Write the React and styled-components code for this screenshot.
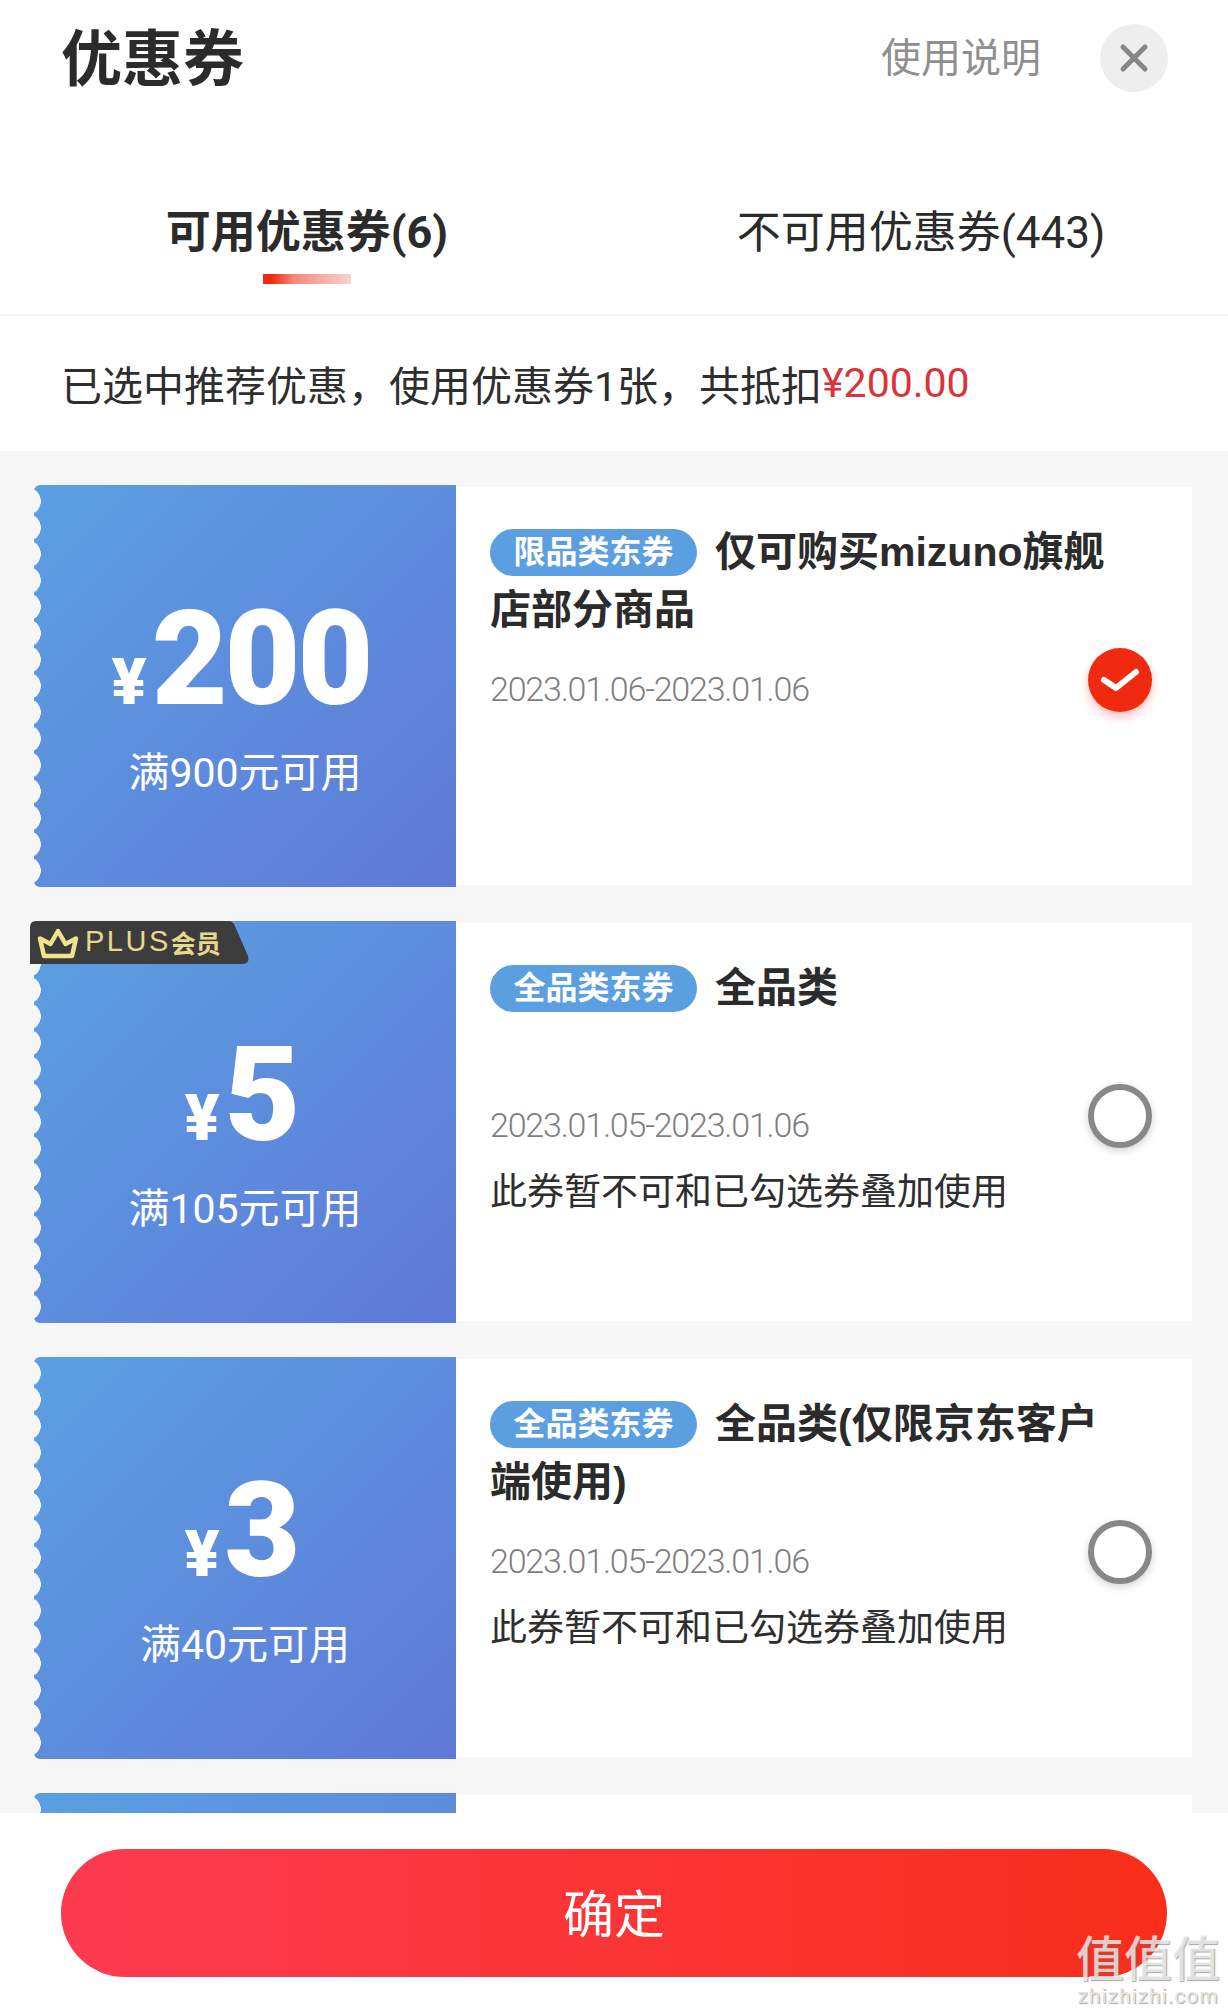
import React from "react";
import styled, { createGlobalStyle } from "styled-components";

const coupons = [
  {
    amount: "200",
    limit: "满900元可用",
    tag: "限品类东券",
    title: ["仅可购买mizuno旗舰", "店部分商品"],
    date: "2023.01.06-2023.01.06",
    checked: true,
  },
  {
    amount: "5",
    limit: "满105元可用",
    tag: "全品类东券",
    title: ["全品类"],
    date: "2023.01.05-2023.01.06",
    note: "此券暂不可和已勾选券叠加使用",
    plus: true,
  },
  {
    amount: "3",
    limit: "满40元可用",
    tag: "全品类东券",
    title: ["全品类(仅限京东客户", "端使用)"],
    date: "2023.01.05-2023.01.06",
    note: "此券暂不可和已勾选券叠加使用",
  },
  { amount: "", limit: "", tag: "", title: [], date: "" },
];

export default function App() {
  return (
    <>
      <GlobalStyle />
      <Page>
        <Header>
          <Title>优惠券</Title>
          <HeaderRight>
            <HelpLink>使用说明</HelpLink>
            <CloseButton>
              <svg width="30" height="30" viewBox="0 0 30 30" fill="none">
                <path d="M4 4L26 26M26 4L4 26" stroke="#868686" strokeWidth="5" strokeLinecap="round" />
              </svg>
            </CloseButton>
          </HeaderRight>
        </Header>

        <Tabs>
          <Tab $active>
            可用优惠券(6)
            <TabBar />
          </Tab>
          <Tab>不可用优惠券(443)</Tab>
        </Tabs>

        <Summary>
          已选中推荐优惠，使用优惠券1张，共抵扣<Price>¥200.00</Price>
        </Summary>

        <List>
          {coupons.map((c, i) => (
            <Coupon key={i}>
              <CouponLeft>
                {c.plus && (
                  <PlusBadge>
                    <svg width="44" height="32" viewBox="0 0 44 32" fill="none">
                      <path
                        d="M8 29L4 11.5L14.5 17L22 4L29.5 17L40 11.5L36 29Z"
                        stroke="#efe38b"
                        strokeWidth="4.5"
                        strokeLinejoin="round"
                      />
                    </svg>
                    <PlusText>PLUS</PlusText>
                    <PlusVip>会员</PlusVip>
                  </PlusBadge>
                )}
                {c.amount && (
                  <>
                    <Amount>
                      <Yen>¥</Yen>
                      {c.amount}
                    </Amount>
                    <Limit>{c.limit}</Limit>
                  </>
                )}
              </CouponLeft>
              <CouponRight>
                {c.tag && (
                  <>
                    <Info>
                      <CouponTitle>
                        <TitleLine>
                          <Tag>{c.tag}</Tag>
                          <span>{c.title[0]}</span>
                        </TitleLine>
                        {c.title[1] && <TitleLine>{c.title[1]}</TitleLine>}
                      </CouponTitle>
                      <DateText>{c.date}</DateText>
                      {c.note && <Note>{c.note}</Note>}
                    </Info>
                    <Radio $checked={c.checked}>
                      {c.checked && (
                        <svg width="40" height="24" viewBox="0 0 40 24" fill="none">
                          <path
                            d="M4 12L16 20L36 4"
                            stroke="#fff"
                            strokeWidth="6"
                            strokeLinecap="round"
                            strokeLinejoin="round"
                          />
                        </svg>
                      )}
                    </Radio>
                  </>
                )}
              </CouponRight>
            </Coupon>
          ))}
        </List>

        <Footer>
          <ConfirmButton>确定</ConfirmButton>
          <Watermark>
            <WatermarkMark>值值值</WatermarkMark>
            <WatermarkUrl>zhizhizhi.com</WatermarkUrl>
          </Watermark>
        </Footer>
      </Page>
    </>
  );
}

const GlobalStyle = createGlobalStyle`
  html, body {
    margin: 0;
    padding: 0;
    background: #fff;
  }
  * {
    box-sizing: border-box;
  }
  body {
    font-family: Roboto, "Noto Sans CJK SC", sans-serif;
  }
`;

const Page = styled.div`
  width: 1228px;
  height: 2015px;
  display: flex;
  flex-direction: column;
  overflow: hidden;
  background: #fff;
  color: #2b2b2b;
`;

const Header = styled.div`
  height: 116px;
  flex: none;
  display: flex;
  align-items: center;
  justify-content: space-between;
  padding: 0 60px 0 61px;
`;

const Title = styled.h1`
  margin: 4px 0 0;
  font-size: 61px;
  line-height: 70px;
  font-weight: 700;
  color: #2b2b2b;
`;

const HeaderRight = styled.div`
  display: flex;
  align-items: center;
  gap: 59px;
`;

const HelpLink = styled.span`
  margin-top: 2px;
  font-size: 40px;
  line-height: 50px;
  color: #8f8f8f;
`;

const CloseButton = styled.div`
  width: 68px;
  height: 68px;
  border-radius: 50%;
  background: #eeeeee;
  display: flex;
  align-items: center;
  justify-content: center;
`;

const Tabs = styled.div`
  flex: none;
  display: grid;
  grid-template-columns: 1fr 1fr;
  margin-top: 91px;
  padding-bottom: 29px;
  border-bottom: 2px solid #f2f2f2;
`;

const Tab = styled.div`
  display: flex;
  flex-direction: column;
  align-items: center;
  height: 78px;
  font-size: ${(props) => (props.$active ? "45px" : "44px")};
  line-height: 52px;
  font-weight: ${(props) => (props.$active ? 700 : 400)};
  color: #2b2b2b;
`;

const TabBar = styled.div`
  width: 88px;
  height: 10px;
  margin-top: 15px;
  background: linear-gradient(90deg, #f0290f 0%, #f0290f 10%, #f6877a 35%, #f6d4d0 100%);
`;

const Summary = styled.div`
  flex: none;
  height: 135px;
  padding: 0 0 2px 61px;
  display: flex;
  align-items: center;
  font-size: 41px;
  white-space: nowrap;
  color: #2e2e2e;
`;

const Price = styled.span`
  color: #d9343c;
`;

const List = styled.div`
  flex: 1;
  min-height: 0;
  overflow: hidden;
  display: flex;
  flex-direction: column;
  gap: 34px;
  padding: 34px 36px 0 34px;
  background: #f6f6f6;
`;

const Coupon = styled.div`
  flex: none;
  height: 402px;
  display: flex;
`;

const CouponLeft = styled.div`
  position: relative;
  flex: none;
  width: 422px;
  display: flex;
  flex-direction: column;
  align-items: center;
  border-radius: 6px 0 0 6px;
  background: linear-gradient(135deg, #5aa0e2 0%, #6079d8 100%);

  &::before {
    content: "";
    position: absolute;
    left: 0;
    top: 0;
    bottom: 0;
    width: 8px;
    background: radial-gradient(circle 14px at -7px 13.2px, #f6f6f6 97%, transparent 100%) 0 3px / 8px 26.4px repeat-y;
  }
`;

const PlusBadge = styled.div`
  position: absolute;
  left: -4px;
  top: 0;
  z-index: 1;
  width: 219px;
  height: 43px;
  display: flex;
  align-items: center;
  padding-left: 6px;
  background: #3c3c3c;
  clip-path: path("M6 0H199Q202 0 204 3L218 35Q220 43 212 43H0V6Q0 0 6 0Z");
`;

const PlusText = styled.span`
  margin: -2px 0 0 5px;
  font-family: "Liberation Sans", sans-serif;
  font-size: 29px;
  letter-spacing: 2.5px;
  color: #e6d98f;
`;

const PlusVip = styled.span`
  margin: -2px 0 0 0;
  font-size: 25px;
  font-weight: 700;
  color: #e6d98f;
`;

const Amount = styled.div`
  display: flex;
  align-items: baseline;
  margin-top: 99px;
  padding-right: 8px;
  height: 150px;
  font-size: 131px;
  line-height: 150px;
  font-weight: 900;
  letter-spacing: -3px;
  color: #fff;
`;

const Yen = styled.span`
  font-size: 65px;
  margin-right: 5px;
  letter-spacing: 0;
`;

const Limit = styled.div`
  margin-top: 14px;
  font-size: 41px;
  line-height: 50px;
  color: #fff;
`;

const CouponRight = styled.div`
  position: relative;
  flex: 1;
  margin: 2px 0;
  padding: 0 0 0 34px;
  background: #fff;
`;

const Info = styled.div`
  padding-top: 36px;
`;

const CouponTitle = styled.div`
  min-height: 116px;
  font-family: "Liberation Sans", "Noto Sans CJK SC", sans-serif;
  font-size: 41px;
  line-height: 58px;
  font-weight: 700;
  color: #2b2b2b;
`;

const TitleLine = styled.div`
  white-space: nowrap;
`;

const Tag = styled.span`
  display: inline-flex;
  align-items: center;
  justify-content: center;
  height: 47px;
  width: 207px;
  margin-right: 18px;
  border-radius: 24px;
  vertical-align: 3px;
  background: #5c9fe0;
  font-size: 32px;
  line-height: 47px;
  font-weight: 700;
  color: #fff;
`;

const DateText = styled.div`
  margin-top: 27px;
  font-size: 34px;
  line-height: 46px;
  font-weight: 300;
  letter-spacing: -1.2px;
  color: #7f7f7f;
`;

const Note = styled.div`
  margin-top: 20px;
  font-size: 37px;
  line-height: 50px;
  white-space: nowrap;
  color: #2e2e2e;
`;

const Radio = styled.div`
  position: absolute;
  right: 40px;
  top: 161px;
  width: 64px;
  height: 64px;
  border-radius: 50%;
  display: flex;
  align-items: center;
  justify-content: center;
  background: ${(props) => (props.$checked ? "#f02a10" : "#fff")};
  border: ${(props) => (props.$checked ? "none" : "6px solid #888888")};
  box-shadow: ${(props) =>
    props.$checked ? "0 5px 10px rgba(240, 42, 16, 0.3)" : "0 3px 8px rgba(0, 0, 0, 0.18)"};
`;

const Footer = styled.div`
  position: relative;
  flex: none;
  height: 202px;
  padding: 36px 61px 0;
  background: #fff;
`;

const ConfirmButton = styled.div`
  height: 128px;
  padding-bottom: 5px;
  border-radius: 64px;
  display: flex;
  align-items: center;
  justify-content: center;
  background: linear-gradient(90deg, #fd3b50 0%, #f92e1a 100%);
  font-size: 51px;
  color: #fff;
`;

const Watermark = styled.div`
  position: absolute;
  right: 8px;
  bottom: 7px;
  display: flex;
  flex-direction: column;
  align-items: center;
`;

const WatermarkMark = styled.div`
  font-size: 48px;
  line-height: 50px;
  font-weight: 500;
  color: rgba(240, 240, 240, 0.78);
  text-shadow: 1px 1px 1px rgba(110, 110, 110, 0.6);
`;

const WatermarkUrl = styled.div`
  margin-top: -1px;
  font-size: 21px;
  line-height: 24px;
  letter-spacing: 1px;
  color: #e4e4e4;
  text-shadow: 1px 1px 1px rgba(110, 110, 110, 0.6);
`;
